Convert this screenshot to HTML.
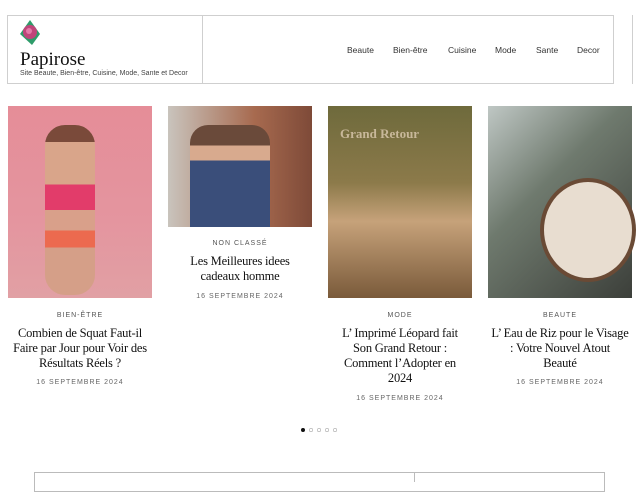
<!DOCTYPE html>
<html><head><meta charset="utf-8"><style>
body{margin:0;width:640px;height:480px;background:#fff;position:relative;overflow:hidden;font-family:"Liberation Sans",sans-serif;color:#222}
.a{position:absolute}
.hdr{left:7px;top:15px;width:607px;height:69px;border:1px solid #cfcfcf;box-sizing:border-box}
.nav{font-size:8.5px;color:#333;top:45px}
.cat{font-size:7px;letter-spacing:1px;color:#555;text-align:center;width:160px}
.t{font-family:"Liberation Serif",serif;font-size:12.5px;line-height:15px;text-align:center;color:#111;width:160px;white-space:nowrap;letter-spacing:-0.2px}
.d{font-size:7px;letter-spacing:1px;color:#666;text-align:center;width:160px}
</style></head><body>
<div class="a hdr"></div>
<div class="a" style="left:202px;top:15px;width:1px;height:69px;background:#cfcfcf"></div>
<div class="a" style="left:632px;top:15px;width:1px;height:69px;background:#cfcfcf"></div>
<svg class="a" style="left:18px;top:20px" width="24" height="26"><polygon points="2,14 12,0 22,14 14,25" fill="#2e9c6a"/><circle cx="12" cy="12" r="7" fill="#c0457a"/><circle cx="11" cy="11" r="3" fill="#e47aa8"/></svg>
<div class="a" style="left:20px;top:49px;font-family:'Liberation Serif',serif;font-size:19px;color:#111">Papirose</div>
<div class="a" style="left:20px;top:70px;font-size:7px;color:#444">Site Beaute, Bien-être, Cuisine, Mode, Sante et Decor</div>
<div class="a nav" style="left:347px">Beaute</div>
<div class="a nav" style="left:393px">Bien-être</div>
<div class="a nav" style="left:448px">Cuisine</div>
<div class="a nav" style="left:495px">Mode</div>
<div class="a nav" style="left:536px">Sante</div>
<div class="a nav" style="left:577px">Decor</div>

<div class="a" style="left:8px;top:106px;width:144px;height:192px;background:linear-gradient(180deg,#e58d98,#e4959f 60%,#e1a0a4)"></div>
<div class="a" style="left:45px;top:125px;width:50px;height:170px;background:linear-gradient(180deg,#7a4a3a 0 10%,#d9a58a 10% 35%,#e23c6a 35% 50%,#d9a08a 50% 62%,#ec6a4f 62% 72%,#d59f88 72%);border-radius:20px"></div>
<div class="a" style="left:168px;top:106px;width:144px;height:121px;background:linear-gradient(90deg,#c9c4bd,#a76a4f 60%,#7e4a38)"></div>
<div class="a" style="left:190px;top:125px;width:80px;height:102px;background:linear-gradient(180deg,#6a4a3a 0 20%,#d8aa8e 20% 35%,#3a4e7a 35%);border-radius:18px 18px 0 0"></div>
<div class="a" style="left:328px;top:106px;width:144px;height:192px;background:linear-gradient(180deg,#6e6a3c,#8c7a4a 40%,#c6a27a 60%,#7a5a3a)"></div>
<div class="a" style="left:340px;top:126px;font-family:'Liberation Serif',serif;font-weight:bold;font-size:13px;color:#c8b89a">Grand Retour</div>
<div class="a" style="left:488px;top:106px;width:144px;height:192px;background:linear-gradient(135deg,#bfc7c4,#6f7a6e 40%,#3c3f3a)"></div>
<div class="a" style="left:540px;top:178px;width:88px;height:96px;border-radius:50%;background:#e8ddd0;border:4px solid #6a4a35"></div>

<div class="a cat" style="left:0;top:312px">BIEN-ÊTRE</div>
<div class="a t" style="left:0;top:326px">Combien de Squat Faut-il<br>Faire par Jour pour Voir des<br>Résultats Réels ?</div>
<div class="a d" style="left:0;top:379px">16 SEPTEMBRE 2024</div>
<div class="a cat" style="left:160px;top:240px">NON CLASSÉ</div>
<div class="a t" style="left:160px;top:254px">Les Meilleures idees<br>cadeaux homme</div>
<div class="a d" style="left:160px;top:293px">16 SEPTEMBRE 2024</div>
<div class="a cat" style="left:320px;top:312px">MODE</div>
<div class="a t" style="left:320px;top:326px">L’ Imprimé Léopard fait<br>Son Grand Retour :<br>Comment l’Adopter en<br>2024</div>
<div class="a d" style="left:320px;top:395px">16 SEPTEMBRE 2024</div>
<div class="a cat" style="left:480px;top:312px">BEAUTE</div>
<div class="a t" style="left:480px;top:326px">L’ Eau de Riz pour le Visage<br>: Votre Nouvel Atout<br>Beauté</div>
<div class="a d" style="left:480px;top:379px">16 SEPTEMBRE 2024</div>

<svg class="a" style="left:300px;top:427px" width="40" height="6"><circle cx="3" cy="3" r="2" fill="#111"/><circle cx="11" cy="3" r="1.7" fill="none" stroke="#aaa" stroke-width=".6"/><circle cx="19" cy="3" r="1.7" fill="none" stroke="#aaa" stroke-width=".6"/><circle cx="27" cy="3" r="1.7" fill="none" stroke="#aaa" stroke-width=".6"/><circle cx="35" cy="3" r="1.7" fill="none" stroke="#aaa" stroke-width=".6"/></svg>
<div class="a" style="left:34px;top:472px;width:571px;height:20px;border:1px solid #bbb;box-sizing:border-box"></div>
<div class="a" style="left:414px;top:472px;width:1px;height:10px;background:#bbb"></div>
</body></html>
